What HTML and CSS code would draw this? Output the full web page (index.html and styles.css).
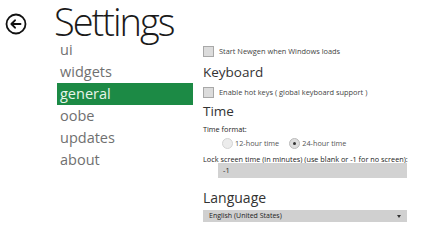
FILE: index.html
```html
<!DOCTYPE html>
<html>
<head>
<meta charset="utf-8">
<link rel="stylesheet" href="styles.css">
</head>
<body>
<div class="page">
  <header class="top">
    <svg class="back" width="22" height="22" viewBox="0 0 22 22">
      <circle cx="11" cy="11" r="9.5" fill="none" stroke="#111" stroke-width="1.8"/>
      <path d="M6.5 11 H15.5 M10 7.3 L6.4 11 L10 14.7" fill="none" stroke="#111" stroke-width="1.9" stroke-linecap="round" stroke-linejoin="round"/>
    </svg>
    <h1 class="title">Settings</h1>
  </header>
  <div class="main">
    <nav class="nav">
      <div class="nav-item">ui</div>
      <div class="nav-item">widgets</div>
      <div class="nav-item active">general</div>
      <div class="nav-item">oobe</div>
      <div class="nav-item">updates</div>
      <div class="nav-item">about</div>
    </nav>
    <section class="content">
      <label class="check first"><span class="box"></span>Start Newgen when Windows loads</label>
      <h2 class="heading kb">Keyboard</h2>
      <label class="check second"><span class="box"></span>Enable hot keys ( global keyboard support )</label>
      <h2 class="heading time">Time</h2>
      <div class="label">Time format:</div>
      <div class="radios">
        <span class="radio"><span class="dot"></span>12-hour time</span>
        <span class="radio"><span class="dot on"></span>24-hour time</span>
      </div>
      <div class="label lock">Lock screen time (in minutes) (use blank or -1 for no screen):</div>
      <div class="input">-1</div>
      <h2 class="heading lang">Language</h2>
      <div class="select"><span>English (United States)</span><span class="arrow"></span></div>
    </section>
  </div>
</div>
</body>
</html>
```
FILE: styles.css
```css
html, body { margin: 0; padding: 0; background: #fff; }
body { font-family: "Open Sans", "Noto Sans", sans-serif; color: #222; width: 443px; height: 240px; overflow: hidden; }
.page { display: flex; flex-direction: column; }
.top { display: flex; align-items: flex-start; height: 39px; }
.back { margin-left: 5px; margin-top: 13px; }
.title { margin: 4px 0 0 27px; font-weight: 300; font-size: 38px; line-height: 35px; color: #1a1a1a; letter-spacing: -2px; }
.main { display: flex; }
.nav { width: 136px; margin-left: 57px; display: flex; flex-direction: column; }
.nav-item { font-size: 14.5px; line-height: 22px; height: 22px; padding-left: 3px; color: #707070; font-weight: 400; }
.nav-item.active { background: #1c8a45; color: #e8f5ea; }
.content { margin-left: 10px; width: 240px; display: flex; flex-direction: column; padding-top: 5px; }
.check { display: flex; align-items: center; font-size: 7.4px; color: #444; height: 14px; white-space: nowrap; }
.check.second { margin-top: 2px; }
.box { width: 11px; height: 11px; box-sizing: border-box; border: 1px solid #a8a8a8; background: #dcdcdc; margin-right: 5px; }
.heading { margin: 0; font-weight: 400; font-size: 13.5px; line-height: 22px; color: #333; }
.heading.kb { margin-top: 3px; }
.heading.time { margin-top: 1px; }
.label { font-size: 7.3px; color: #222; line-height: 10px; white-space: nowrap; margin-top: 2px; }
.radios { display: flex; gap: 10px; padding-left: 19px; height: 16px; align-items: center; font-size: 7.3px; color: #555; margin-top: 1px; }
.radio { display: flex; align-items: center; }
.dot { width: 11px; height: 11px; border-radius: 50%; box-sizing: border-box; border: 1px solid #d4d4d4; background: #ececec; margin-right: 2px; position: relative; }
.dot.on { border-color: #bbb; background: #dedede; }
.dot.on::after { content: ""; position: absolute; left: 3px; top: 3px; width: 3px; height: 3px; border-radius: 50%; background: #333; }
.label.lock { margin-top: 3px; }
.input { margin-left: 15px; margin-top: -1px; width: 189px; height: 15px; background: #d2d2d2; font-size: 7.4px; line-height: 15px; padding-left: 5px; box-sizing: border-box; color: #222; }
.heading.lang { margin-top: 9px; font-size: 14px; }
.select { width: 204px; height: 12px; margin-top: 1px; background: #d0d0d0; font-size: 7px; line-height: 12px; display: flex; justify-content: space-between; align-items: center; padding: 0 6px; box-sizing: border-box; color: #222; }
.arrow { width: 0; height: 0; border-left: 2px solid transparent; border-right: 2px solid transparent; border-top: 3px solid #333; }
```
